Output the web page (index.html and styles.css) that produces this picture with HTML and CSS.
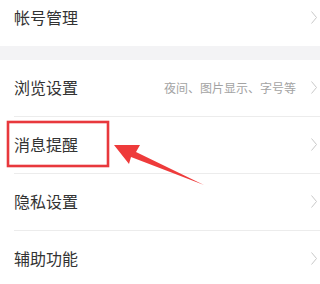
FILE: index.html
```html
<!DOCTYPE html>
<html lang="zh-CN">
<head>
  <meta charset="UTF-8">
  <meta name="viewport" content="width=device-width, initial-scale=1.0">
  <title>设置</title>
  <link rel="stylesheet" href="styles.css">
</head>
<body>
<div class="page">
  <!-- 第一组 -->
  <div class="group group-top">
    <div class="row">
      <span class="label">帐号管理</span>
      <svg class="chevron" width="6" height="13" viewBox="0 0 6 13"><polyline points="0.5,0.5 5.5,6.5 0.5,12.5"/></svg>
    </div>
  </div>

  <!-- 第二组 -->
  <div class="group">
    <div class="row">
      <span class="label">浏览设置</span>
      <span class="hint">夜间、图片显示、字号等</span>
      <svg class="chevron" width="6" height="13" viewBox="0 0 6 13"><polyline points="0.5,0.5 5.5,6.5 0.5,12.5"/></svg>
    </div>
    <div class="row">
      <span class="label">消息提醒</span>
      <svg class="chevron" width="6" height="13" viewBox="0 0 6 13"><polyline points="0.5,0.5 5.5,6.5 0.5,12.5"/></svg>
    </div>
    <div class="row">
      <span class="label">隐私设置</span>
      <svg class="chevron" width="6" height="13" viewBox="0 0 6 13"><polyline points="0.5,0.5 5.5,6.5 0.5,12.5"/></svg>
    </div>
    <div class="row">
      <span class="label">辅助功能</span>
      <svg class="chevron" width="6" height="13" viewBox="0 0 6 13"><polyline points="0.5,0.5 5.5,6.5 0.5,12.5"/></svg>
    </div>
  </div>

  <!-- 标注 -->
  <svg class="mark" width="320" height="284" viewBox="0 0 320 284">
    <rect x="8" y="122" width="100" height="44" fill="none" stroke="#e8383d" stroke-width="2.6"/>
    <polygon points="114,145 140,145 136,152 204,185 131,157 129,164" fill="#ee3b3b"/>
  </svg>
</div>
</body>
</html>
```

FILE: styles.css
```css
body {
  margin: 0;
  background: #fff;
  font-family: "Noto Sans CJK SC", "Noto Sans", sans-serif;
}
.page {
  position: relative;
  width: 320px;
  height: 284px;
  overflow: hidden;
}
.group {
  background: #fff;
}
.group-top {
  margin-top: -10px;
  border-bottom: 14px solid #f3f3f5;
}
.row {
  display: flex;
  align-items: center;
  height: 54px;
  margin-left: 14px;
  padding-right: 3px;
  padding-bottom: 2px; /* text sits a bit high in the row */
}
.row + .row {
  border-top: 1px solid #ececec;
}
.label {
  flex: 1;
  font-size: 16px;
  color: #333;
}
.hint {
  font-size: 12px;
  color: #a3a3a3;
  margin-right: 15px;
}
.chevron {
  fill: none;
  stroke: #c8c8c8;
  stroke-width: 1;
}
.mark {
  position: absolute;
  left: 0;
  top: 0;
}
```
